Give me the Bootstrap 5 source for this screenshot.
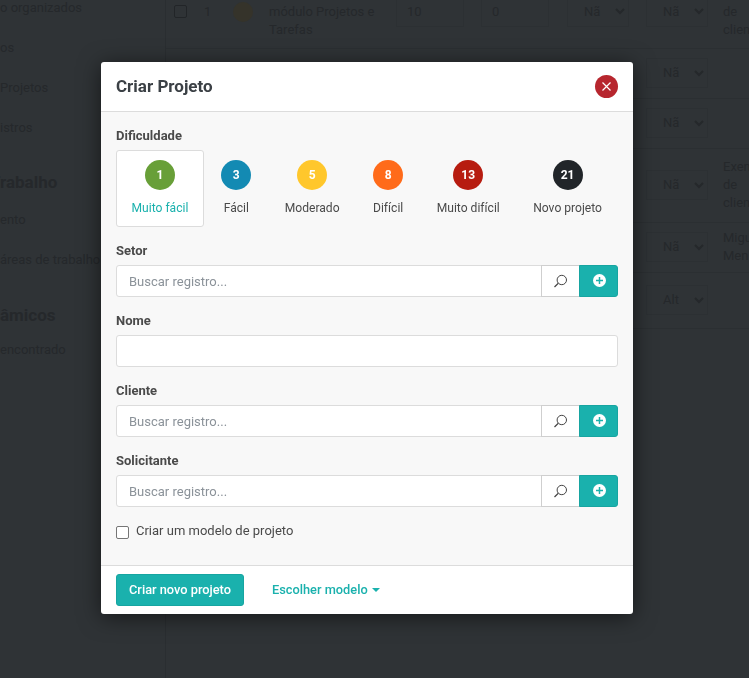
<!DOCTYPE html>
<html lang="pt-BR">
<head>
  <meta charset="UTF-8">
  <meta name="viewport" content="width=device-width, initial-scale=1.0">
  <title>Criar Projeto</title>
  <link href="https://cdn.jsdelivr.net/npm/bootstrap@5.3.0/dist/css/bootstrap.min.css" rel="stylesheet">
  <style>
    html, body { height: 100%; overflow: hidden; }
    body { background: #2f3336; font-family: Roboto, "Liberation Sans", sans-serif; font-size: 13px; color: #25282b; }

    /* pagina atras do modal */
    .fundo { height: 678px; overflow: hidden; }
    .lateral { width: 165px; flex: none; white-space: nowrap; overflow: hidden; }
    .lat-item { height: 40px; line-height: 40px; font-size: 13px; }
    .lat-primeiro { margin-top: -12px; }
    .lat-titulo { font-size: 17px; font-weight: 700; line-height: 24px; margin: 22px 0 6px; }
    .lat-titulo.fim { margin: 23px 0 3px; }
    .lat-titulo.lat-corte { text-indent: -10px; }
    .area-tabela { margin-top: -24px; width: 620px; flex: none; border-left: 1px solid #2a2e31; }
    .tabela-fundo { table-layout: fixed; border-collapse: collapse; width: 620px; }
    .tabela-fundo td { border-bottom: 1px solid #2b2f32; padding: 0; line-height: 18px; font-size: 13px; vertical-align: middle; overflow: hidden; white-space: nowrap; }
    .quad { display: block; width: 13px; height: 13px; border: 1px solid #222528; border-radius: 2px; margin-left: 8px; }
    .bola-fundo { display: block; width: 20px; height: 20px; border-radius: 50%; background: #35332a; margin-left: 4px; }
    .caixa-fundo { height: 30px; width: 62px; line-height: 28px; border: 1px solid #2c3033; display: flex; justify-content: space-between; align-items: center; padding: 0 3px 0 16px; overflow: hidden; }
    .caixa-fundo.um { margin-left: 6px; }
    .caixa-fundo.dois { margin-left: 5px; }
    .caixa-num { display: block; height: 30px; line-height: 28px; border: 1px solid #2c3033; width: 68px; padding-left: 10px; margin-left: 5px; }
    .caixa-fundo svg { flex: none; }
    .cel-texto { padding-left: 5px !important; }

    /* modal */
    .modal.aberto { display: block; padding-right: 15px; overflow: hidden; }
    .aberto .modal-dialog { width: 532px; max-width: 532px; margin: 62px auto 0; }
    .aberto .modal-content { border: 0; border-radius: 3px; box-shadow: 0 3px 22px rgba(0,0,0,.55); overflow: hidden; }
    .aberto .modal-header { height: 50px; padding: 0 15px; border-bottom: 1px solid #dcdcdc; }
    .aberto .modal-title { font-size: 17px; font-weight: 700; color: #3b4045; margin-top: 1px; }
    .bt-fechar { width: 23px; height: 23px; border: 0; padding: 0; border-radius: 50%; background: #b7262e; }
    .aberto .modal-body { background: #f8f8f8; height: 453px; padding: 15px; }
    .aberto .modal-footer { height: 49px; padding: 8px 15px; border-top: 1px solid #dcdcdc; justify-content: flex-start; gap: 28px; }
    .aberto .modal-footer > * { margin: 0; }
    .rotulo { display: block; font-size: 13px; font-weight: 700; color: #4a4a4a; line-height: 18px; margin-bottom: 5px; }
    .dific { height: 77px; margin-bottom: 15px; }
    .dific-op { border: 1px solid transparent; border-radius: 3px; padding: 9px 15px 0; text-align: center; color: #4a4a4a; }
    .dific-op.ativa { background: #fff; border-color: #dcdcdc; color: #1ab1ad; padding: 9px 14.500px 0; }
    .bola { display: block; width: 30px; height: 30px; line-height: 30px; border-radius: 50%; margin: 0 auto 9px; color: #fff; font-size: 12px; font-weight: 700; }
    .dific-txt { display: block; font-size: 12.1px; line-height: 18px; white-space: nowrap; }
    .campo { margin-bottom: 15px; }
    .campo .form-control { height: 32px; min-height: 32px; font-size: 13px; border-color: #dcdcdc; border-radius: 3px; padding: 0 12px; background: #fff; color: #4a4a4a; }
    .campo .form-control::placeholder { color: #8b9299; }
    .bt-busca { width: 39px; height: 32px; padding: 0; background: #fff; border: 1px solid #cfcfcf; border-radius: 0; margin-left: -1px; }
    .bt-add { width: 39px; height: 32px; padding: 0 0 3px 1px; background: #1ab1ad; border: 1px solid #17a5a1; border-radius: 0 3px 3px 0 !important; }
    .marca { margin-top: 2px; min-height: 0; padding: 0; display: flex; gap: 7px; align-items: center; color: #4a4a4a; }
    .marca .form-check-input { float: none; margin: 2px 0 0 0; width: 13px; height: 13px; border: 1px solid #767676; border-radius: 2px; background-color: #fff; }
    .marca label { font-size: 13px; line-height: 18px; }
    .bt-criar { height: 32px; padding: 0 12px; font-size: 12.8px; font-weight: 500; color: #fff; background: #1ab1ad; border: 1px solid #17a5a1; border-radius: 3px; }
    .bt-modelo { padding: 0; border: 0; background: none; font-size: 12.8px; font-weight: 500; color: #1ab1ad; }
    .seta { display: inline-block; margin-left: 4px; vertical-align: 2px; border-top: 4px solid #1ab1ad; border-left: 4px solid transparent; border-right: 4px solid transparent; }
  </style>
</head>

<body>
  <div class="fundo d-flex">
    <div class="lateral">
      <div class="lat-item lat-primeiro">o organizados</div>
      <div class="lat-item">os</div>
      <div class="lat-item">Projetos</div>
      <div class="lat-item">istros</div>
      <div class="lat-titulo lat-corte">Trabalho</div>
      <div class="lat-item">ento</div>
      <div class="lat-item">áreas de trabalho</div>
      <div class="lat-titulo fim">âmicos</div>
      <div class="lat-item">encontrado</div>
    </div>
    <div class="area-tabela">
      <table class="tabela-fundo">
        <colgroup>
          <col style="width:30px"><col style="width:33px"><col style="width:35px"><col style="width:127px">
          <col style="width:85px"><col style="width:85px"><col style="width:80px"><col style="width:77px"><col>
        </colgroup>
        <tr style="height:72px">
          <td><span class="quad"></span></td><td class="ps-2">1</td><td><span class="bola-fundo"></span></td>
          <td class="cel-texto"><br>módulo Projetos e<br>Tarefas</td>
          <td><span class="caixa-num">10</span></td><td><span class="caixa-num">0</span></td>
          <td><span class="caixa-fundo um">Nã <svg width="10" height="7" viewBox="0 0 10 7"><path d="M1 1l4 4 4-4" stroke="#25282b" stroke-width="2" fill="none"/></svg></span></td>
          <td><span class="caixa-fundo dois">Nã <svg width="10" height="7" viewBox="0 0 10 7"><path d="M1 1l4 4 4-4" stroke="#25282b" stroke-width="2" fill="none"/></svg></span></td>
          <td class="cel-texto"><br>de<br>clien</td>
        </tr>
        <tr style="height:50px"><td colspan="7"></td><td><span class="caixa-fundo dois">Nã <svg width="10" height="7" viewBox="0 0 10 7"><path d="M1 1l4 4 4-4" stroke="#25282b" stroke-width="2" fill="none"/></svg></span></td><td></td></tr>
        <tr style="height:50px"><td colspan="7"></td><td><span class="caixa-fundo dois">Nã <svg width="10" height="7" viewBox="0 0 10 7"><path d="M1 1l4 4 4-4" stroke="#25282b" stroke-width="2" fill="none"/></svg></span></td><td></td></tr>
        <tr style="height:74px"><td colspan="7"></td><td><span class="caixa-fundo dois">Nã <svg width="10" height="7" viewBox="0 0 10 7"><path d="M1 1l4 4 4-4" stroke="#25282b" stroke-width="2" fill="none"/></svg></span></td><td class="cel-texto">Exen<br>de<br>clien</td></tr>
        <tr style="height:50px"><td colspan="7"></td><td><span class="caixa-fundo dois">Nã <svg width="10" height="7" viewBox="0 0 10 7"><path d="M1 1l4 4 4-4" stroke="#25282b" stroke-width="2" fill="none"/></svg></span></td><td class="cel-texto">Migu<br>Men</td></tr>
        <tr style="height:56px"><td colspan="7"></td><td><span class="caixa-fundo dois">Alt <svg width="10" height="7" viewBox="0 0 10 7"><path d="M1 1l4 4 4-4" stroke="#25282b" stroke-width="2" fill="none"/></svg></span></td><td></td></tr>
      </table>
    </div>
  </div>

  <div class="modal aberto" tabindex="-1">
    <div class="modal-dialog">
      <div class="modal-content">
        <div class="modal-header">
          <h5 class="modal-title">Criar Projeto</h5>
          <button type="button" class="bt-fechar ms-auto d-flex align-items-center justify-content-center" aria-label="Fechar">
            <svg width="9" height="9" viewBox="0 0 9 9"><path d="M.5.5l8 8M8.500.5l-8 8" stroke="#fff" stroke-width="1.200" fill="none"/></svg>
          </button>
        </div>
        <div class="modal-body">
          <span class="rotulo">Dificuldade</span>
          <div class="dific d-flex justify-content-between">
            <div class="dific-op ativa"><span class="bola" style="background:#689f38">1</span><span class="dific-txt">Muito fácil</span></div>
            <div class="dific-op"><span class="bola" style="background:#138ab3">3</span><span class="dific-txt">Fácil</span></div>
            <div class="dific-op"><span class="bola" style="background:#ffc72c">5</span><span class="dific-txt">Moderado</span></div>
            <div class="dific-op"><span class="bola" style="background:#ff6b1a">8</span><span class="dific-txt">Difícil</span></div>
            <div class="dific-op"><span class="bola" style="background:#b71c10">13</span><span class="dific-txt">Muito difícil</span></div>
            <div class="dific-op"><span class="bola" style="background:#212529">21</span><span class="dific-txt">Novo projeto</span></div>
          </div>

          <div class="campo">
            <label class="rotulo">Setor</label>
            <div class="input-group">
              <input type="text" class="form-control" placeholder="Buscar registro...">
              <button class="btn bt-busca" type="button"><svg width="15" height="15" viewBox="0 0 15 15"><circle cx="8.800" cy="6" r="4.700" fill="none" stroke="#444" stroke-width="1"/><path d="M5.300 9.300L1.500 13" stroke="#444" stroke-width="1.200"/></svg></button>
              <button class="btn bt-add" type="button"><svg width="13" height="13" viewBox="0 0 13 13"><circle cx="6.500" cy="6.500" r="6.500" fill="#fff"/><path d="M6.500 3v7M3 6.500h7" stroke="#1ab1ad" stroke-width="1.500"/></svg></button>
            </div>
          </div>

          <div class="campo">
            <label class="rotulo">Nome</label>
            <input type="text" class="form-control">
          </div>

          <div class="campo">
            <label class="rotulo">Cliente</label>
            <div class="input-group">
              <input type="text" class="form-control" placeholder="Buscar registro...">
              <button class="btn bt-busca" type="button"><svg width="15" height="15" viewBox="0 0 15 15"><circle cx="8.800" cy="6" r="4.700" fill="none" stroke="#444" stroke-width="1"/><path d="M5.300 9.300L1.500 13" stroke="#444" stroke-width="1.200"/></svg></button>
              <button class="btn bt-add" type="button"><svg width="13" height="13" viewBox="0 0 13 13"><circle cx="6.500" cy="6.500" r="6.500" fill="#fff"/><path d="M6.500 3v7M3 6.500h7" stroke="#1ab1ad" stroke-width="1.500"/></svg></button>
            </div>
          </div>

          <div class="campo">
            <label class="rotulo">Solicitante</label>
            <div class="input-group">
              <input type="text" class="form-control" placeholder="Buscar registro...">
              <button class="btn bt-busca" type="button"><svg width="15" height="15" viewBox="0 0 15 15"><circle cx="8.800" cy="6" r="4.700" fill="none" stroke="#444" stroke-width="1"/><path d="M5.300 9.300L1.500 13" stroke="#444" stroke-width="1.200"/></svg></button>
              <button class="btn bt-add" type="button"><svg width="13" height="13" viewBox="0 0 13 13"><circle cx="6.500" cy="6.500" r="6.500" fill="#fff"/><path d="M6.500 3v7M3 6.500h7" stroke="#1ab1ad" stroke-width="1.500"/></svg></button>
            </div>
          </div>

          <div class="form-check marca">
            <input class="form-check-input" type="checkbox" id="criarModelo">
            <label for="criarModelo">Criar um modelo de projeto</label>
          </div>
        </div>
        <div class="modal-footer">
          <button type="button" class="btn bt-criar">Criar novo projeto</button>
          <button type="button" class="btn bt-modelo">Escolher modelo<span class="seta"></span></button>
        </div>
      </div>
    </div>
  </div>

  <script src="https://cdn.jsdelivr.net/npm/bootstrap@5.3.0/dist/js/bootstrap.bundle.min.js"></script>
</body>
</html>
